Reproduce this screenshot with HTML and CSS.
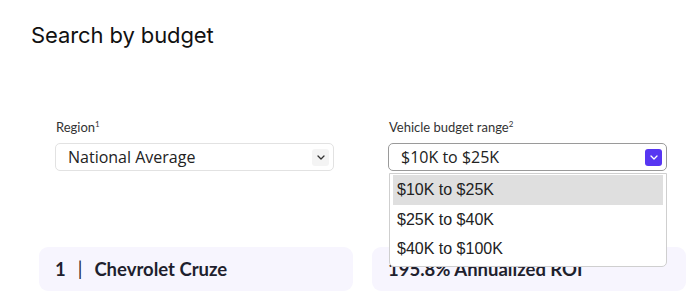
FILE: index.html
```html
<!DOCTYPE html>
<html lang="en">
<head>
  <meta charset="UTF-8" />
  <meta name="viewport" content="width=device-width, initial-scale=1.0"/>
  <title>Search by budget</title>
  <link rel="stylesheet" href="styles.css">
</head>
<body>

  <h1 class="title">Search by budget</h1>

  <!-- Filters -->
  <div class="filters">
    <div class="field">
      <label class="field-label">Region<sup>1</sup></label>
      <div class="select">
        <span class="select-value">National Average</span>
        <span class="select-btn">
          <svg width="8" height="5" viewBox="0 0 8 5"><path d="M1 1l3 3 3-3" fill="none" stroke="#333" stroke-width="1.3" stroke-linecap="round" stroke-linejoin="round"/></svg>
        </span>
      </div>
    </div>

    <div class="field">
      <label class="field-label">Vehicle budget range<sup>2</sup></label>
      <div class="select open">
        <span class="select-value">$10K to $25K</span>
        <span class="select-btn active">
          <svg width="8" height="5" viewBox="0 0 8 5"><path d="M1 1l3 3 3-3" fill="none" stroke="#fff" stroke-width="1.3" stroke-linecap="round" stroke-linejoin="round"/></svg>
        </span>
        <ul class="options">
          <li class="selected">$10K to $25K</li>
          <li>$25K to $40K</li>
          <li>$40K to $100K</li>
        </ul>
      </div>
    </div>
  </div>

  <!-- Results -->
  <div class="results">
    <div class="card">1<span class="sep">|</span>Chevrolet Cruze</div>
    <div class="card">195.8% Annualized ROI</div>
  </div>

</body>
</html>
```

FILE: styles.css
```css
body {
  margin: 0;
  font-family: 'Lato', sans-serif;
  background-color: #fff;
  color: #1a1a1a;
}

.title {
  margin: 20px 0 0 31px;
  font-family: 'Inter', sans-serif;
  font-weight: 400;
  font-size: 22px;
  line-height: 30px;
  letter-spacing: -0.1px;
  color: #111;
}

.filters {
  display: grid;
  grid-template-columns: 279px 279px;
  column-gap: 54px;
  margin: 69px 0 0 55px;
}

.field-label {
  display: block;
  font-size: 13px;
  line-height: 16px;
  margin: 0 0 8px 1px;
  color: #333;
}

.field-label sup {
  font-size: 8px;
  vertical-align: 5px;
  line-height: 0;
}

.select {
  position: relative;
  height: 28px;
  box-sizing: border-box;
  border: 1px solid #e2e2e2;
  border-radius: 5px;
  display: flex;
  align-items: center;
  justify-content: space-between;
  padding: 0 4px 0 12px;
  background: #fff;
}

.select.open {
  border-color: #9a9a9a;
}

.select-value {
  font-family: 'Open Sans', sans-serif;
  font-size: 16px;
  color: #222;
}

.select-btn {
  width: 17px;
  height: 17px;
  border-radius: 3px;
  background: #f4f4f4;
  display: flex;
  align-items: center;
  justify-content: center;
}

.select-btn.active {
  background: #5736f2;
}

.options {
  position: absolute;
  top: 29px;
  left: 0;
  width: 278px;
  box-sizing: border-box;
  margin: 0;
  padding: 1px 3px 2px;
  list-style: none;
  background: #fff;
  border: 1px solid #cfcfcf;
  border-radius: 0 0 5px 5px;
  z-index: 2;
}

.options li {
  font-family: 'Liberation Sans', Arial, sans-serif;
  font-size: 16px;
  height: 29.5px;
  line-height: 29.5px;
  padding-left: 4px;
  color: #222;
}

.options li.selected {
  background: #dfdfdf;
}

.results {
  display: grid;
  grid-template-columns: 314px 314px;
  column-gap: 19px;
  margin: 76px 0 0 39px;
}

.card {
  height: 44px;
  box-sizing: border-box;
  padding: 0 16px;
  display: flex;
  align-items: center;
  background: #f7f5fe;
  border-radius: 9px;
  font-weight: 700;
  font-size: 18.5px;
  color: #1f1f2e;
}

.card .sep {
  margin: 0 12px 0 12px;
  font-weight: 400;
}
```
